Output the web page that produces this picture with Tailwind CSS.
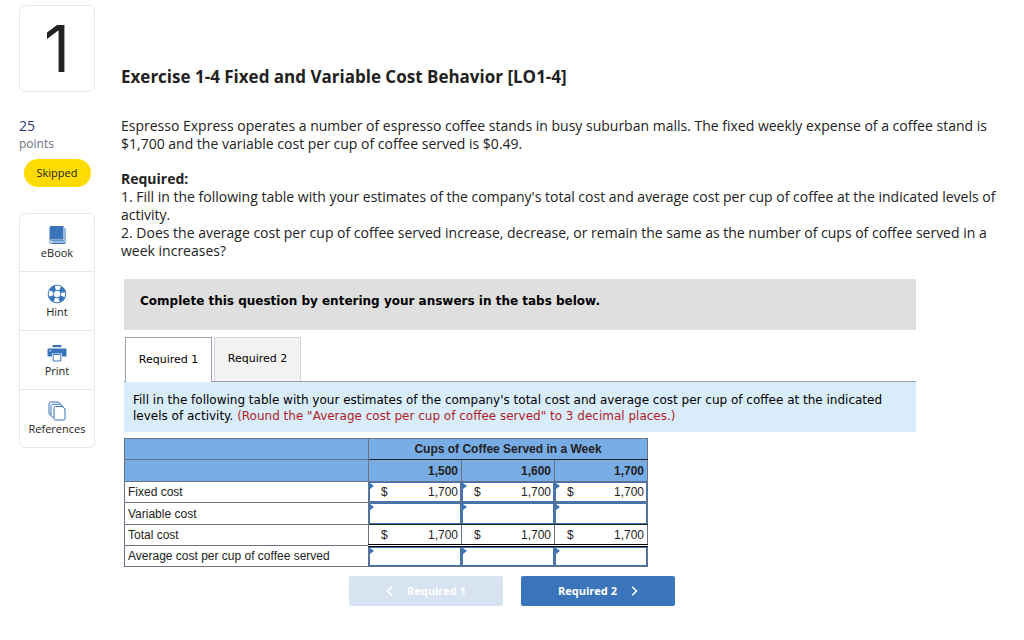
<!DOCTYPE html>
<html lang="en">
<head>
    <meta charset="UTF-8">
    <meta name="viewport" content="width=device-width, initial-scale=1.0">
    <title>Exercise 1-4 Fixed and Variable Cost Behavior</title>
    <script src="https://cdn.jsdelivr.net/npm/@tailwindcss/browser@4"></script>
</head>
<body class="bg-white text-[#222] font-['Open_Sans',sans-serif]">
    <div class="flex gap-[26px] pl-[19px] pr-[22px] pt-[5px]">
        <!-- Sidebar -->
        <aside class="w-[76px] shrink-0">
            <div class="h-[87px] rounded-md border border-gray-200 flex items-center justify-center font-['Inter',sans-serif] text-[64px] leading-[64px]">1</div>
            <p class="mt-[25px] text-[14px] leading-[18px] text-[#2a3a78]">25</p>
            <p class="text-[12px] leading-[18px] text-gray-500">points</p>
            <div class="mt-[6px] mx-auto w-[67px] h-[28px] rounded-full bg-[#ffdc00] text-[11px] leading-[28px] text-center">Skipped</div>

            <nav class="mt-[26px] rounded-md border border-gray-200 divide-y divide-gray-200 text-[11px] leading-[14px]">
                <button class="w-full h-[58px] flex flex-col items-center justify-center gap-px">
                    <svg class="w-5 h-5" viewBox="0 0 20 20" fill="none" aria-hidden="true">
                        <path d="M4.500 1H16.500v13.500H4.500c-1 0-1.500.5-2 1V2.500C2.500 1.500 3.500 1 4.500 1z" fill="#3a75bb"/>
                        <path d="M18 3v15.500H4.500c-2 0-2-3.200 0-3.200H17M5 17h12" stroke="#3a75bb"/>
                    </svg>
                    eBook
                </button>
                <button class="w-full h-[59px] flex flex-col items-center justify-center gap-px">
                    <svg class="w-5 h-5" viewBox="0 0 20 20" fill="none" aria-hidden="true">
                        <circle cx="10" cy="10" r="8.800" stroke="#3a75bb"/>
                        <circle cx="10" cy="10" r="6.500" stroke="#3a75bb" stroke-width="5" stroke-dasharray="5.100 5.110" stroke-dashoffset="-2.550"/>
                        <circle cx="10" cy="10" r="3.800" stroke="#3a75bb"/>
                    </svg>
                    Hint
                </button>
                <button class="w-full h-[59px] flex flex-col items-center justify-center gap-px">
                    <svg class="w-5 h-5" viewBox="0 0 20 20" aria-hidden="true">
                        <path d="M5.500 2h9v2.200h-9z" fill="#3a75bb"/>
                        <path d="M1.500 5.500h17c.6 0 1 .4 1 1v7h-4.500v-3H5v3H.5v-7c0-.6.400-1 1-1z" fill="#3a75bb"/>
                        <path d="M6.200 11.500h7.600v6.500H6.200z" fill="#fff" stroke="#3a75bb"/>
                        <circle cx="3.300" cy="7.800" r=".8" fill="#fff"/>
                    </svg>
                    Print
                </button>
                <button class="w-full h-[57px] flex flex-col items-center justify-center gap-px">
                    <svg class="w-5 h-5" viewBox="0 0 20 20" fill="#fff" stroke="#3a75bb" aria-hidden="true">
                        <path d="M4 1h7.500l2.500 2.500V14H3.500c-.8 0-1.500-.5-1.500-1.500V3c0-1.200.8-2 2-2z"/>
                        <path d="M6 3.200h7.500L16 5.700V16H5.500c-.8 0-1.500-.5-1.500-1.500V5.200c0-1.200.8-2 2-2z"/>
                        <path d="M8.500 5.500h7l2.500 2.500v10c0 .6-.4 1-1 1H8.500c-.8 0-1.500-.5-1.500-1.500V7c0-1 .7-1.500 1.500-1.500z"/>
                    </svg>
                    References
                </button>
            </nav>
        </aside>

        <!-- Question -->
        <main class="flex-1 min-w-0 pt-[61px]">
            <h1 class="text-[17px] leading-[22px] font-bold">Exercise 1-4 Fixed and Variable Cost Behavior [LO1-4]</h1>
            <div class="mt-[29px] text-[14px] leading-[18px]">
                <p>Espresso Express operates a number of espresso coffee stands in busy suburban malls. The fixed weekly expense of a coffee stand is $1,700 and the variable cost per cup of coffee served is $0.49.</p>
                <h2 class="mt-[17px] font-bold">Required:</h2>
                <p>1. Fill in the following table with your estimates of the company's total cost and average cost per cup of coffee at the indicated levels of activity.</p>
                <p>2. Does the average cost per cup of coffee served increase, decrease, or remain the same as the number of cups of coffee served in a week increases?</p>
            </div>

            <section class="mt-[19px] ml-[3px] max-w-[792px] font-['DejaVu_Sans',sans-serif] text-black">
                <div class="bg-[#dfdfdf] px-4 pt-[13px] pb-[20px] text-[12px] leading-[18px] font-bold">Complete this question by entering your answers in the tabs below.</div>

                <div class="mt-[7px] flex gap-[2px] pl-px border-b border-gray-400 text-[11px]">
                    <button class="w-[87px] h-[45px] -mb-px border border-b-0 border-gray-400 bg-white">Required 1</button>
                    <button class="w-[87px] h-[44px] border border-b-0 border-gray-300 bg-[#f2f2f2]">Required 2</button>
                </div>
                <p class="bg-[#d9ecfa] pl-[9px] pr-4 pt-[10px] pb-[8px] text-[12px] leading-[16px]">Fill in the following table with your estimates of the company's total cost and average cost per cup of coffee at the indicated levels of activity. <span class="text-[#b01c24]">(Round the "Average cost per cup of coffee served" to 3 decimal places.)</span></p>

                <table class="mt-[6px] w-[524px] table-fixed border-collapse font-['Liberation_Sans',sans-serif] text-[12px] leading-[16px] text-[#222]">
                    <colgroup>
                        <col class="w-[244px]">
                        <col>
                        <col>
                        <col>
                    </colgroup>
                    <thead class="bg-[#78ace5]">
                        <tr class="h-[21px]">
                            <td class="border border-gray-500 p-0"></td>
                            <th colspan="3" class="border border-gray-500 border-b-[#222] p-0">Cups of Coffee Served in a Week</th>
                        </tr>
                        <tr class="h-[22px]">
                            <td class="border border-gray-500 p-0"></td>
                            <th class="border border-gray-500 py-0 pl-0 pr-[3px] text-right">1,500</th>
                            <th class="border border-gray-500 py-0 pl-0 pr-[3px] text-right">1,600</th>
                            <th class="border border-gray-500 py-0 pl-0 pr-[3px] text-right">1,700</th>
                        </tr>
                    </thead>
                    <tbody>
                        <tr class="h-[21px]">
                            <th class="border border-gray-500 py-0 pl-[3px] text-left font-normal">Fixed cost</th>
                            <td class="border border-gray-500 p-0">
                                <div class="relative flex h-[20px] items-center border border-[#3a75bb] pl-[11px] pr-[2px]">
                                    <span class="absolute left-0 top-0 border-y-[3px] border-l-[4px] border-y-transparent border-l-[#3a75bb]"></span>
                                    <span>$</span><input aria-label="Fixed cost, 1,500 cups" value="1,700" class="w-full min-w-0 text-right">
                                </div>
                            </td>
                            <td class="border border-gray-500 p-0">
                                <div class="relative flex h-[20px] items-center border border-[#3a75bb] pl-[11px] pr-[2px]">
                                    <span class="absolute left-0 top-0 border-y-[3px] border-l-[4px] border-y-transparent border-l-[#3a75bb]"></span>
                                    <span>$</span><input aria-label="Fixed cost, 1,600 cups" value="1,700" class="w-full min-w-0 text-right">
                                </div>
                            </td>
                            <td class="border border-gray-500 p-0">
                                <div class="relative flex h-[20px] items-center border border-[#3a75bb] pl-[11px] pr-[2px]">
                                    <span class="absolute left-0 top-0 border-y-[3px] border-l-[4px] border-y-transparent border-l-[#3a75bb]"></span>
                                    <span>$</span><input aria-label="Fixed cost, 1,700 cups" value="1,700" class="w-full min-w-0 text-right">
                                </div>
                            </td>
                        </tr>
                        <tr class="h-[22px]">
                            <th class="border border-gray-500 py-0 pl-[3px] text-left font-normal">Variable cost</th>
                            <td class="border border-gray-500 border-b-[#222] p-0">
                                <div class="relative flex h-[21px] items-center border border-[#3a75bb]">
                                    <span class="absolute left-0 top-0 border-y-[3px] border-l-[4px] border-y-transparent border-l-[#3a75bb]"></span>
                                    <input aria-label="Variable cost, 1,500 cups" class="w-full h-full min-w-0 text-right">
                                </div>
                            </td>
                            <td class="border border-gray-500 border-b-[#222] p-0">
                                <div class="relative flex h-[21px] items-center border border-[#3a75bb]">
                                    <span class="absolute left-0 top-0 border-y-[3px] border-l-[4px] border-y-transparent border-l-[#3a75bb]"></span>
                                    <input aria-label="Variable cost, 1,600 cups" class="w-full h-full min-w-0 text-right">
                                </div>
                            </td>
                            <td class="border border-gray-500 border-b-[#222] p-0">
                                <div class="relative flex h-[21px] items-center border border-[#3a75bb]">
                                    <span class="absolute left-0 top-0 border-y-[3px] border-l-[4px] border-y-transparent border-l-[#3a75bb]"></span>
                                    <input aria-label="Variable cost, 1,700 cups" class="w-full h-full min-w-0 text-right">
                                </div>
                            </td>
                        </tr>
                        <tr class="h-[21px]">
                            <th class="border border-gray-500 py-0 pl-[3px] text-left font-normal">Total cost</th>
                            <td class="border border-gray-500 border-b-3 border-b-black [border-bottom-style:double] py-0 pl-[12px] pr-[3px]"><div class="flex justify-between"><span>$</span><span>1,700</span></div></td>
                            <td class="border border-gray-500 border-b-3 border-b-black [border-bottom-style:double] py-0 pl-[12px] pr-[3px]"><div class="flex justify-between"><span>$</span><span>1,700</span></div></td>
                            <td class="border border-gray-500 border-b-3 border-b-black [border-bottom-style:double] py-0 pl-[12px] pr-[3px]"><div class="flex justify-between"><span>$</span><span>1,700</span></div></td>
                        </tr>
                        <tr class="h-[21px]">
                            <th class="border border-gray-500 py-0 pl-[3px] text-left font-normal">Average cost per cup of coffee served</th>
                            <td class="border border-gray-500 p-0">
                                <div class="relative flex h-[19px] items-center border border-[#3a75bb]">
                                    <span class="absolute left-0 top-0 border-y-[3px] border-l-[4px] border-y-transparent border-l-[#3a75bb]"></span>
                                    <input aria-label="Average cost, 1,500 cups" class="w-full h-full min-w-0 text-right">
                                </div>
                            </td>
                            <td class="border border-gray-500 p-0">
                                <div class="relative flex h-[19px] items-center border border-[#3a75bb]">
                                    <span class="absolute left-0 top-0 border-y-[3px] border-l-[4px] border-y-transparent border-l-[#3a75bb]"></span>
                                    <input aria-label="Average cost, 1,600 cups" class="w-full h-full min-w-0 text-right">
                                </div>
                            </td>
                            <td class="border border-gray-500 p-0">
                                <div class="relative flex h-[19px] items-center border border-[#3a75bb]">
                                    <span class="absolute left-0 top-0 border-y-[3px] border-l-[4px] border-y-transparent border-l-[#3a75bb]"></span>
                                    <input aria-label="Average cost, 1,700 cups" class="w-full h-full min-w-0 text-right">
                                </div>
                            </td>
                        </tr>
                    </tbody>
                </table>

                <div class="mt-[9px] flex justify-center gap-[18px] pr-[16px] font-['Open_Sans',sans-serif] text-[11px] font-bold text-white">
                    <button disabled class="w-[154px] h-[30px] rounded-xs bg-[#d7e3f1] flex items-center justify-center gap-[14px]">
                        <svg class="w-[7px] h-[10px]" viewBox="0 0 7 10" fill="none" stroke="currentColor" stroke-width="1.500" aria-hidden="true"><path d="M6 .8L1.500 5L6 9.200"/></svg>
                        Required 1
                    </button>
                    <button class="w-[154px] h-[30px] rounded-xs bg-[#3a75bb] flex items-center justify-center gap-[14px]">
                        Required 2
                        <svg class="w-[7px] h-[10px]" viewBox="0 0 7 10" fill="none" stroke="currentColor" stroke-width="1.500" aria-hidden="true"><path d="M1 .8L5.500 5L1 9.200"/></svg>
                    </button>
                </div>
            </section>
        </main>
    </div>
</body>
</html>
